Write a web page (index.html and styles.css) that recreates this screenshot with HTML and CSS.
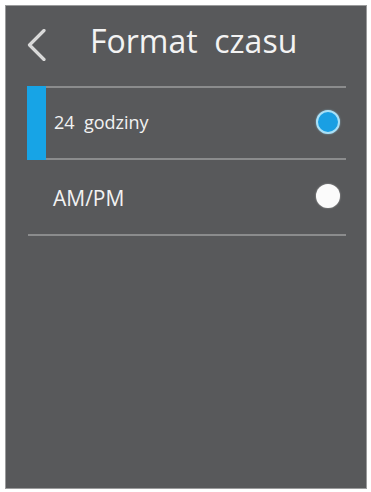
FILE: index.html
```html
<!DOCTYPE html>
<html lang="pl">
<head>
<meta charset="utf-8">
<title>Format czasu</title>
<link rel="stylesheet" href="styles.css">
</head>
<body>
<div class="screen">
  <div class="header">
    <svg class="back" width="22" height="32" viewBox="0 0 22 32" aria-hidden="true">
      <path d="M18 1.5 L3.5 16 L18 30.5" fill="none" stroke="#d9d9d9" stroke-width="3.2" stroke-linecap="round" stroke-linejoin="round"/>
    </svg>
    <h1 class="title">Format&nbsp; czasu</h1>
  </div>
  <div class="list">
    <div class="row row-first selected">
      <span class="indicator"></span>
      <span class="label label-small">24&nbsp; godziny</span>
      <span class="radio radio-on"></span>
    </div>
    <div class="row row-second">
      <span class="label label-large">AM/PM</span>
      <span class="radio radio-off"></span>
    </div>
  </div>
</div>
</body>
</html>
```

FILE: styles.css
```css
html, body {
  margin: 0;
  padding: 0;
  background: #ffffff;
}

body {
  font-family: "Open Sans", "Noto Sans", "DejaVu Sans", sans-serif;
  padding: 6px 5px 4px 6px;
}

.screen {
  width: 360px;
  height: 482px;
  background: #58595b;
  box-shadow: 0 0 0 1px #9a9b9c;
  box-sizing: border-box;
}

.header {
  height: 80px;
  box-sizing: border-box;
  padding-top: 15px;
  padding-left: 20px;
  display: flex;
  align-items: flex-start;
}

.back {
  margin-top: 8px;
  flex: none;
}

.title {
  margin: 0 0 0 42px;
  font-size: 32px;
  font-weight: 400;
  line-height: 40px;
  color: #f3f3f3;
  letter-spacing: 0;
}

.list {
  padding: 0 20px 0 22px;
}

.row {
  display: flex;
  align-items: center;
  border-bottom: 2px solid #8b8c8d;
  box-sizing: border-box;
  padding-right: 6px;
}

.row-first {
  border-top: 2px solid #8b8c8d;
  height: 74px;
  padding-bottom: 3px;
}

.row-second {
  height: 76px;
  padding-left: 25px;
  padding-top: 2px;
}

.indicator {
  align-self: stretch;
  width: 19px;
  margin: -2px 8px -5px -1px;
  background: #17a4e6;
  flex: none;
}

.label {
  flex: 1;
  color: #f2f2f2;
  white-space: nowrap;
}

.label-small {
  font-size: 18px;
  line-height: 24px;
}

.label-large {
  font-size: 21px;
  line-height: 28px;
}

.radio {
  width: 24px;
  height: 24px;
  border-radius: 50%;
  box-sizing: border-box;
  flex: none;
}

.radio-on {
  background: #1a9fe3;
  border: 2.5px solid #a9e0f7;
  box-shadow: 0 0 2px rgba(160, 220, 245, 0.6);
}

.radio-off {
  background: #fbfbfb;
  box-shadow: 0 0 2px rgba(255, 255, 255, 0.5);
  margin-top: -4px;
}
```
